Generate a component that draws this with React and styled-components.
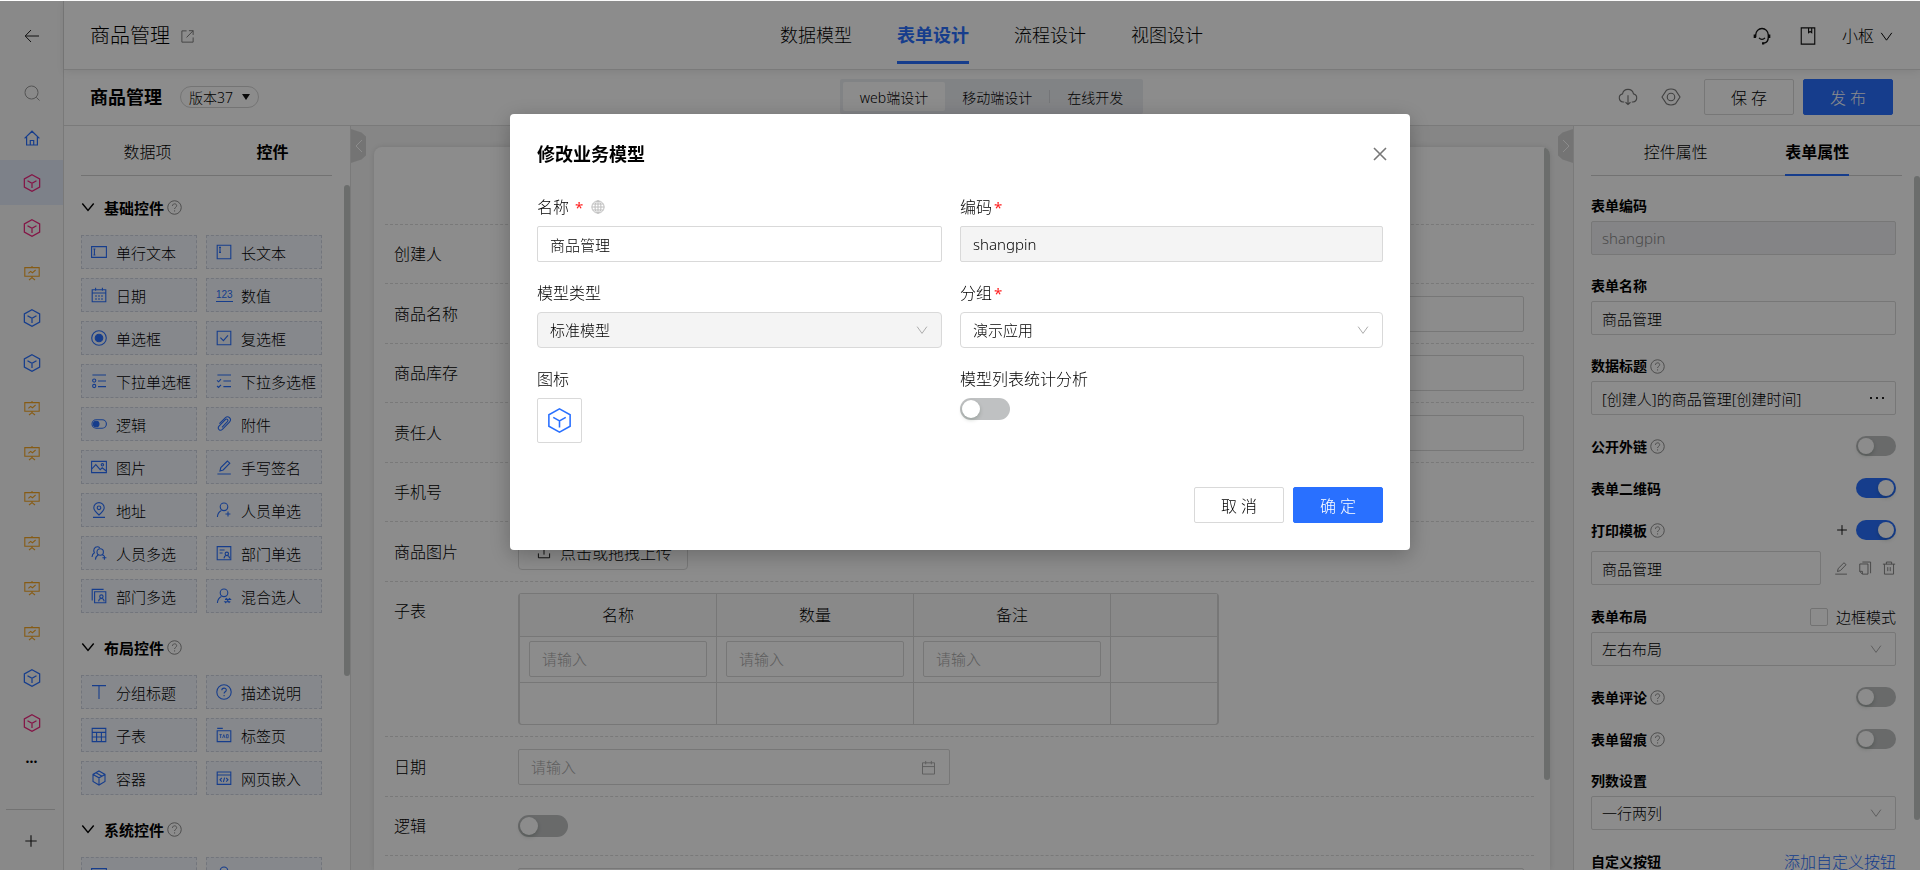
import React from 'react';
import styled, { createGlobalStyle, css } from 'styled-components';

const icons = {
  back: <path d="M15 8H1.5M7 2 1.2 8 7 14" />,
  search: (
    <>
      <circle cx="7.5" cy="7.5" r="6.5" />
      <path d="m12.3 12.3 3.2 3.2" />
    </>
  ),
  home: <path d="M.6 8.4 8 1.2l7.4 7.2M2.6 7v8h10.8V7M6.3 15v-4.5h3.4V15" />,
  cube: <path d="M8 .6 14.8 4.3v7.4L8 15.4 1.2 11.7V4.3zM4 6l4 2.3L12 6M8 8.3v4.2" />,
  board: (
    <path d="M.8 2.6h14.4v8.6H.8zM8 1v1.6M8 11.2v1.6M5 15l3-2.4L11 15M4.4 8.4l2.2-2 1.8 1.4 3.2-2.8" />
  ),
  plus: <path d="M8 1.5v13M1.5 8h13" />,
  share: <path d="M7 2H2v12h12V9M9.5 1.8H14v4.5M14 1.8 7 9" />,
  headset: (
    <>
      <path d="M2.4 9V7.2a5.6 5.9 0 0 1 11.2 0V9M13.6 9c0 3.4-1.6 5-4.2 5.4M5.4 9.6c1.4 1.8 3.8 1.8 5.2 0" />
      <path d="M1.6 6.6v3.2M14.4 6.6v3.2M8 14.6h2" strokeWidth="2" />
    </>
  ),
  book: <path d="M2 .8h12v14.4H2zM8.5.8V5l1.4-1 1.4 1V.8" />,
  down: <path d="m1.5 3.5 6.5 9 6.5-9" />,
  fold: <path d="m1.5 4 6.5 8 6.5-8" />,
  left: <path d="M11 2 5 8l6 6" />,
  right: <path d="m5 2 6 6-6 6" />,
  close: <path d="m2 2 12 12M14 2 2 14" />,
  cloud: <path d="M5 12H4a3.3 3.3 0 0 1-.4-6.5 4.5 4.5 0 0 1 8.8 0A3.3 3.3 0 0 1 12 12h-1M8 6.5V14M6 12.2 8 14l2-1.8" />,
  eye: (
    <>
      <path d="M.8 8 4.4 2.6c2.2-1.2 5-1.2 7.2 0L15.2 8l-3.6 5.4c-2.2 1.2-5 1.2-7.2 0z" />
      <circle cx="8" cy="8" r="3" />
    </>
  ),
  help: (
    <>
      <circle cx="8" cy="8" r="7.2" />
      <path d="M5.8 6.3C5.8 3.3 10.3 3.5 10.3 6c0 1.8-2.2 1.8-2.2 3.6M8.1 11v1.3" />
    </>
  ),
  globe: (
    <>
      <circle cx="8" cy="8" r="7" />
      <ellipse cx="8" cy="8" rx="3.4" ry="7" />
      <path d="M8 1v14M1 8h14M2 4.6h12M2 11.4h12" />
    </>
  ),
  input: <path d="M.6 2.6h14.8v10.8H.6zM3.4 5v6M2.4 5h2M2.4 11h2" />,
  textarea: <path d="M1.2 1.2h13.6v13.6H1.2zM4 3.4v5M3 3.4h2M3 8.4h2" />,
  date: <path d="M1.2 2.8h13.6v12H1.2zM1.2 6h13.6M4.6.8v3M11.4.8v3M4 9h2M7 9h2M10 9h2M4 12h2M7 12h2M10 12h2" />,
  radio: (
    <>
      <circle cx="8" cy="8" r="7.3" />
      <circle cx="8" cy="8" r="3.8" fill="currentColor" />
    </>
  ),
  checkbox: <path d="M1.2 1.2h13.6v13.6H1.2zM4.4 7.6l3 3 4.6-5.2" />,
  radioList: (
    <>
      <path d="M1.4 2H15M7 8h8M7 13.6h8" />
      <circle cx="3.2" cy="7.6" r="1.6" />
      <circle cx="3.2" cy="13" r="1.6" />
    </>
  ),
  checkList: <path d="M1.4 2H15M7.4 8H15M7.4 13.6H15M1 7.4l1.6 1.4L5 6.2M1 13l1.6 1.4L5 11.8" />,
  toggle: (
    <>
      <rect x="1" y="3.8" width="14.4" height="8.4" rx="4.2" />
      <circle cx="5.2" cy="8" r="2.8" fill="currentColor" />
    </>
  ),
  clip: <path d="M6 11.4 11.4 5.6c1.4-1.6-.6-3.4-2-2L3 10.2c-2 2.4 1 5.4 3.4 3.2l7-7.2c3-3.4-1.2-7-4.2-4.4L3.4 7.6" />,
  image: (
    <>
      <path d="M.6 2.4h14.8v11.2H.6zM.8 10l4-4.4 4.4 5 2-1.8 4 3.2" />
      <circle cx="11.4" cy="5.8" r="1.2" />
    </>
  ),
  pen: <path d="M1.4 15h13.4M4 12l.8-3.4L11.4 2l2.4 2.2-6.6 6.8z" />,
  pin: (
    <>
      <path d="M8 13C4.4 9.8 2.8 8.2 2.8 5.8a5.2 5.2 0 0 1 10.4 0C13.2 8.2 11.6 9.8 8 13zM2 15.4h12" />
      <circle cx="8" cy="5.8" r="1.8" />
    </>
  ),
  user: (
    <>
      <circle cx="8" cy="4.8" r="3.8" />
      <path d="M1.4 15c.2-3.4 1.8-5.2 4-6.4M9.4 12h5M12 9.6v5" />
    </>
  ),
  users: (
    <>
      <circle cx="9.2" cy="7" r="3.2" />
      <path d="M4.4 14.6c.2-2.6 1.2-3.6 2.8-4.8M1 12c.2-2.4 1-3.4 2.4-4.2C1.8 5 3.4 1.8 6.4 1.8c1 0 1.8.4 2.4 1M11.4 12.8h4M13.4 10.8v4M11.4 9.8l1.6 1" />
    </>
  ),
  dept: (
    <>
      <path d="M14.8 14.8H1.2V1.6h13.6zM3.6 5h5M3.6 8h3" />
      <circle cx="10.8" cy="8.8" r="1.7" />
      <path d="M8 13.4c.4-3.8 5.2-3.8 5.6 0" />
    </>
  ),
  depts: (
    <>
      <path d="M3.6 3.8h11.2v11H3.6zM1.2 12.4V1.4h11.4" />
      <circle cx="10.4" cy="8.6" r="1.7" />
      <path d="M7.6 13.4c.4-3.8 5.2-3.8 5.6 0" />
    </>
  ),
  mixed: (
    <>
      <circle cx="8" cy="4.8" r="3.8" />
      <path d="M1.4 15c.2-3.4 1.8-5.2 4-6.4M9 11.4h5.4l-1.2-1.2M14.4 13.8H9l1.2 1.2M10 10l3.4 5" />
    </>
  ),
  title: <path d="M1 1.6h14M8 1.6V15" />,
  table: <path d="M1.2 1.4h13.6v13.2H1.2zM1.2 5.4h13.6M1.2 10h13.6M5.6 5.4v9.2M10.4 5.4v9.2" />,
  tab: (
    <>
      <path d="M1.2 3.8h13.6v10.8H1.2zM1.2 1.4h5.6" />
      <path d="M3.4 7.6h2.4M4.6 7.6V11M6.6 11l1.2-3.4L9 11M10.4 7.6h1.8v3.2h-1.8z" strokeWidth=".8" />
    </>
  ),
  box: <path d="M8 1 14 4.4v7L8 15l-6-3.6v-7zM2 4.4l6 3.4 6-3.4M8 7.8V15M5 2.8l6 3.4" />,
  embed: <path d="M1.2 2h13.6v12.4H1.2zM1.2 5h13.6M5.8 8 4 9.8l1.8 1.8M10.2 8l1.8 1.8-1.8 1.8M8.6 7.6l-1.2 4.4" />,
  upload: <path d="M8 11V1.6M4.6 5 8 1.6 11.4 5M1.6 9.6v5h12.8v-5" />,
  calendar: <path d="M1.6 3h12.8v12H1.6zM1.6 7h12.8M5 1v3.6M11 1v3.6" />,
  copy: <path d="M5 1.2h9.4V14M2 3.4h9.4V15H5l-3-3zM2 11.8h3V15" />,
  trash: <path d="M1 3.6h14M5 3.6V1.2h6v2.4M2.8 3.6V15h10.4V3.6M6.6 7v4.6M9.4 7v4.6" />,
};

const Icon = ({ name, size = 16, stroke = 1 }) => (
  <Svg viewBox="0 0 16 16" $size={size} strokeWidth={stroke} aria-hidden="true">
    {icons[name]}
  </Svg>
);

const railItems = [
  ['cube', 'pink', true],
  ['cube', 'pink'],
  ['board', 'amber'],
  ['cube', 'blue'],
  ['cube', 'blue'],
  ['board', 'amber'],
  ['board', 'amber'],
  ['board', 'amber'],
  ['board', 'amber'],
  ['board', 'amber'],
  ['board', 'amber'],
  ['cube', 'blue'],
  ['cube', 'pink'],
];

const controlGroups = [
  {
    title: '基础控件',
    items: [
      ['input', '单行文本'],
      ['textarea', '长文本'],
      ['date', '日期'],
      ['number', '数值'],
      ['radio', '单选框'],
      ['checkbox', '复选框'],
      ['radioList', '下拉单选框'],
      ['checkList', '下拉多选框'],
      ['toggle', '逻辑'],
      ['clip', '附件'],
      ['image', '图片'],
      ['pen', '手写签名'],
      ['pin', '地址'],
      ['user', '人员单选'],
      ['users', '人员多选'],
      ['dept', '部门单选'],
      ['depts', '部门多选'],
      ['mixed', '混合选人'],
    ],
  },
  {
    title: '布局控件',
    items: [
      ['title', '分组标题'],
      ['help', '描述说明'],
      ['table', '子表'],
      ['tab', '标签页'],
      ['box', '容器'],
      ['embed', '网页嵌入'],
    ],
  },
  {
    title: '系统控件',
    items: [['input'], ['user']],
  },
];

const colors = { pink: '#f0257f', amber: '#f5a623', blue: '#2970ff' };

const Rail = () => (
  <RailNav>
    <RailButton $tall aria-label="返回">
      <Icon name="back" />
    </RailButton>
    <RailButton $color="#999" aria-label="搜索">
      <Icon name="search" />
    </RailButton>
    <RailButton $color={colors.blue} aria-label="首页">
      <Icon name="home" stroke={1.2} />
    </RailButton>
    {railItems.map(([name, color, active], i) => (
      <RailButton key={i} $color={colors[color]} $active={active} aria-label={name}>
        <Icon name={name} size={name === 'cube' ? 18 : 16} stroke={1.1} />
      </RailButton>
    ))}
    <MoreButton aria-label="更多">...</MoreButton>
    <RailFooter>
      <RailButton aria-label="添加">
        <Icon name="plus" size={14} stroke={1.3} />
      </RailButton>
    </RailFooter>
  </RailNav>
);

const TopBar = () => (
  <Header>
    <HeaderTitle>
      商品管理
      <Icon name="share" size={15} />
    </HeaderTitle>
    <HeaderNav>
      <HeaderLink href="#model">数据模型</HeaderLink>
      <HeaderLink href="#form" $active>
        表单设计
      </HeaderLink>
      <HeaderLink href="#flow">流程设计</HeaderLink>
      <HeaderLink href="#view">视图设计</HeaderLink>
    </HeaderNav>
    <HeaderActions>
      <IconButton aria-label="客服">
        <Icon name="headset" size={18} stroke={1.2} />
      </IconButton>
      <IconButton aria-label="文档">
        <Icon name="book" size={18} />
      </IconButton>
      <UserButton>
        小枢
        <Icon name="down" size={13} stroke={1.2} />
      </UserButton>
    </HeaderActions>
  </Header>
);

const ToolBar = () => (
  <SubHeader>
    <SubTitle>
      <h1>商品管理</h1>
      <VersionButton>
        版本37
        <Caret />
      </VersionButton>
    </SubTitle>
    <Segmented>
      <Segment $active>web端设计</Segment>
      <Segment>移动端设计</Segment>
      <SegmentLine />
      <Segment>在线开发</Segment>
    </Segmented>
    <SubActions>
      <IconButton $muted aria-label="下载">
        <Icon name="cloud" size={20} stroke={0.9} />
      </IconButton>
      <IconButton $muted aria-label="预览">
        <Icon name="eye" size={20} stroke={0.9} />
      </IconButton>
      <ButtonRow>
        <Button>保 存</Button>
        <Button $primary>发 布</Button>
      </ButtonRow>
    </SubActions>
  </SubHeader>
);

const ControlPanel = () => (
  <LeftPanel>
    <PanelTabs $left>
      <PanelTab>数据项</PanelTab>
      <PanelTab $active>控件</PanelTab>
    </PanelTabs>
    <Groups>
      {controlGroups.map((group) => (
        <section key={group.title}>
          <GroupTitle>
            <Icon name="fold" size={14} stroke={1.6} />
            <span>{group.title}</span>
            <Help>
              <Icon name="help" size={15} />
            </Help>
          </GroupTitle>
          <ControlGrid>
            {group.items.map(([name, label]) => (
              <Control key={name}>
                <ControlIcon>
                  {name === 'number' ? <Digits>123</Digits> : <Icon name={name} stroke={1.1} />}
                </ControlIcon>
                {label}
              </Control>
            ))}
          </ControlGrid>
        </section>
      ))}
    </Groups>
    <Thumb $top={59} $height={491} />
  </LeftPanel>
);

const PairRow = ({ label, id }) => (
  <FormRow>
    <FormItem>
      <label htmlFor={id}>{label}</label>
      <TextInput id={id} />
    </FormItem>
    <FormItem>
      <span />
      <TextInput aria-label={label} />
    </FormItem>
  </FormRow>
);

const FormCanvas = () => (
  <Canvas>
    <Handle aria-label="收起左侧">
      <Icon name="left" />
    </Handle>
    <Handle $right aria-label="收起右侧">
      <Icon name="right" />
    </Handle>
    <Card>
      <CardHead />
      <FormRows>
        <FormRow>
          <FormItem>
            <span>创建人</span>
          </FormItem>
        </FormRow>
        <PairRow label="商品名称" id="goodsName" />
        <PairRow label="商品库存" id="goodsStock" />
        <PairRow label="责任人" id="owner" />
        <FormRow>
          <FormItem>
            <span>手机号</span>
          </FormItem>
        </FormRow>
        <FormRow>
          <FormItem>
            <span>商品图片</span>
            <UploadButton>
              <Icon name="upload" size={14} />
              点击或拖拽上传
            </UploadButton>
          </FormItem>
        </FormRow>
        <FormRow $wide>
          <FormItem>
            <span>子表</span>
            <SubTable>
              <thead>
                <tr>
                  <th>名称</th>
                  <th>数量</th>
                  <th>备注</th>
                  <th aria-label="操作" />
                </tr>
              </thead>
              <tbody>
                <tr>
                  <td><TextInput placeholder="请输入" aria-label="名称" /></td>
                  <td><TextInput placeholder="请输入" aria-label="数量" /></td>
                  <td><TextInput placeholder="请输入" aria-label="备注" /></td>
                  <td />
                </tr>
                <tr>
                  <td />
                  <td />
                  <td />
                  <td />
                </tr>
              </tbody>
            </SubTable>
          </FormItem>
        </FormRow>
        <FormRow>
          <FormItem>
            <label htmlFor="date">日期</label>
            <Affixed>
              <TextInput id="date" placeholder="请输入" />
              <Affix>
                <Icon name="calendar" size={15} />
              </Affix>
            </Affixed>
          </FormItem>
        </FormRow>
        <FormRow>
          <FormItem>
            <label htmlFor="logic">逻辑</label>
            <Switch id="logic" $large />
          </FormItem>
        </FormRow>
        <FormRow $wide>
          <FormItem>
            <span />
            <TextInput aria-label="备注" />
          </FormItem>
        </FormRow>
      </FormRows>
      <Thumb $top={0} $height={633} />
    </Card>
  </Canvas>
);

const SwitchRow = ({ id, label, help, checked, children }) => (
  <PropRow>
    <PropLabel htmlFor={id}>
      {label}
      {help && <Help><Icon name="help" size={15} /></Help>}
    </PropLabel>
    <PropTools>
      {children}
      <Switch id={id} defaultChecked={checked} />
    </PropTools>
  </PropRow>
);

const PropPanel = () => (
  <RightPanel>
    <PanelTabs>
      <PanelTab>控件属性</PanelTab>
      <PanelTab $active $line>
        表单属性
      </PanelTab>
    </PanelTabs>
    <Props>
      <PropField>
        <PropLabel htmlFor="formCode">表单编码</PropLabel>
        <TextInput id="formCode" $small $disabled defaultValue="shangpin" disabled />
      </PropField>
      <PropField>
        <PropLabel htmlFor="formName">表单名称</PropLabel>
        <TextInput id="formName" $small defaultValue="商品管理" />
      </PropField>
      <PropField>
        <PropLabel htmlFor="dataTitle">
          数据标题
          <Help>
            <Icon name="help" size={15} />
          </Help>
        </PropLabel>
        <Affixed>
          <TextInput id="dataTitle" $small defaultValue="[创建人]的商品管理[创建时间]" />
          <Affix $dark>
            <Dots><i /><i /><i /></Dots>
          </Affix>
        </Affixed>
      </PropField>
      <SwitchRow id="publicLink" label="公开外链" help />
      <SwitchRow id="qrcode" label="表单二维码" checked />
      <PrintBlock>
        <SwitchRow id="print" label="打印模板" help checked>
          <IconButton aria-label="添加模板">
            <Icon name="plus" size={12} stroke={1.3} />
          </IconButton>
        </SwitchRow>
        <TemplateRow>
          <TextInput $small defaultValue="商品管理" aria-label="模板名称" />
          <IconButton $muted aria-label="编辑"><Icon name="pen" size={14} /></IconButton>
          <IconButton $muted aria-label="复制"><Icon name="copy" size={14} /></IconButton>
          <IconButton $muted aria-label="删除"><Icon name="trash" size={14} /></IconButton>
        </TemplateRow>
      </PrintBlock>
      <PropField>
        <PropRow>
          <PropLabel htmlFor="layout">表单布局</PropLabel>
          <CheckLabel>
            <Checkbox type="checkbox" />
            边框模式
          </CheckLabel>
        </PropRow>
        <SelectBox id="layout" value="左右布局" small />
      </PropField>
      <SwitchRow id="comment" label="表单评论" help />
      <SwitchRow id="trace" label="表单留痕" help />
      <PropField>
        <PropLabel htmlFor="columns">列数设置</PropLabel>
        <SelectBox id="columns" value="一行两列" small />
      </PropField>
      <PropRow>
        <PropLabel as="span">自定义按钮</PropLabel>
        <AddLink href="#add">添加自定义按钮</AddLink>
      </PropRow>
    </Props>
    <Thumb $top={50} $height={644} />
  </RightPanel>
);

const SelectBox = ({ id, value, small, disabled }) => (
  <Affixed>
    <Select id={id} $small={small} $filled={disabled} disabled={disabled}>
      <option>{value}</option>
    </Select>
    <Affix>
      <Icon name="down" size={12} stroke={1.3} />
    </Affix>
  </Affixed>
);

const ModelDialog = () => (
  <Mask>
    <Dialog role="dialog" aria-labelledby="dialogTitle">
      <DialogHead>
        <h2 id="dialogTitle">修改业务模型</h2>
        <CloseButton aria-label="关闭">
          <Icon name="close" size={16} stroke={1.6} />
        </CloseButton>
      </DialogHead>
      <DialogBody>
        <Field>
          <FieldLabel htmlFor="name">
            名称 <Star $spaced>*</Star>
            <Globe>
              <Icon name="globe" size={14} stroke={1.1} />
            </Globe>
          </FieldLabel>
          <TextInput id="name" defaultValue="商品管理" />
        </Field>
        <Field>
          <FieldLabel htmlFor="code">
            编码<Star>*</Star>
          </FieldLabel>
          <TextInput id="code" $filled defaultValue="shangpin" disabled />
        </Field>
        <Field>
          <FieldLabel htmlFor="type">模型类型</FieldLabel>
          <SelectBox id="type" value="标准模型" disabled />
        </Field>
        <Field>
          <FieldLabel htmlFor="group">
            分组<Star>*</Star>
          </FieldLabel>
          <SelectBox id="group" value="演示应用" />
        </Field>
        <Field>
          <FieldLabel as="span">图标</FieldLabel>
          <IconPicker aria-label="选择图标">
            <Icon name="cube" size={25} />
          </IconPicker>
        </Field>
        <Field>
          <FieldLabel htmlFor="stats">模型列表统计分析</FieldLabel>
          <Switch id="stats" $large />
        </Field>
      </DialogBody>
      <DialogFoot>
        <Button>取 消</Button>
        <Button $primary>确 定</Button>
      </DialogFoot>
    </Dialog>
  </Mask>
);

const App = () => (
  <>
    <GlobalStyle />
    <Page>
      <Rail />
      <Main>
        <TopBar />
        <ToolBar />
        <Workspace>
          <ControlPanel />
          <FormCanvas />
          <PropPanel />
        </Workspace>
      </Main>
    </Page>
    <ModelDialog />
  </>
);

const GlobalStyle = createGlobalStyle`
  *, *::before, *::after {
    box-sizing: border-box;
  }

  body {
    margin: 0;
    background: #fff;
    overflow: hidden;
  }

  body, button, input, select {
    font-family: "Noto Sans", "Noto Sans CJK SC", sans-serif;
    font-weight: 300;
    color: #000;
  }

  button {
    border: 0;
    padding: 0;
    background: none;
    cursor: pointer;
  }

  h1, h2 {
    margin: 0;
  }
`;

const Svg = styled.svg`
  display: block;
  flex: none;
  width: ${(p) => p.$size}px;
  height: ${(p) => p.$size}px;
  fill: none;
  stroke: currentColor;
`;

const Page = styled.div`
  display: flex;
  height: 100vh;
  padding-top: 1px;
`;

const RailNav = styled.nav`
  flex: none;
  width: 64px;
  display: flex;
  flex-direction: column;
  background: #f9f9f9;
  border-right: 1px solid #dcdcdc;
`;

const RailButton = styled.button`
  flex: none;
  display: flex;
  align-items: center;
  justify-content: center;
  height: 45px;
  color: ${(p) => p.$color || '#222'};
  background: ${(p) => (p.$active ? '#e3ebfa' : 'transparent')};

  ${(p) =>
    p.$tall &&
    css`
      height: 69px;
    `}
`;

const MoreButton = styled.button`
  height: 26px;
  font-size: 14px;
  line-height: 20px;
  font-weight: 700;
`;

const RailFooter = styled.div`
  margin: auto 8px 7px 6px;
  border-top: 1px solid #cfcfcf;
  display: flex;
  flex-direction: column;
  padding: 8px 0 0;
`;

const Main = styled.div`
  flex: 1;
  min-width: 0;
  display: flex;
  flex-direction: column;
`;

const Header = styled.header`
  flex: none;
  height: 69px;
  display: grid;
  grid-template-columns: 1fr auto 1fr;
  align-items: center;
  padding: 2px 27px 0 26px;
  border-bottom: 1px solid #dedede;
  box-shadow: 0 2px 8px rgba(0, 0, 0, 0.08);
  z-index: 1;
`;

const HeaderTitle = styled.div`
  display: flex;
  align-items: center;
  gap: 10px;
  font-size: 20px;
  line-height: 28px;

  svg {
    color: #777;
  }
`;

const HeaderNav = styled.nav`
  display: flex;
  gap: 45px;
`;

const HeaderLink = styled.a`
  padding: 14px 0 13px;
  border-bottom: 3px solid transparent;
  font-size: 18px;
  line-height: 26px;
  color: #000;
  text-decoration: none;

  ${(p) =>
    p.$active &&
    css`
      font-weight: 700;
      color: #2970ff;
      border-color: #2970ff;
    `}
`;

const HeaderActions = styled.div`
  display: flex;
  justify-content: flex-end;
  align-items: center;
  gap: 28px;
`;

const IconButton = styled.button`
  display: flex;
  color: ${(p) => (p.$muted ? '#777' : '#111')};
`;

const UserButton = styled.button`
  display: flex;
  align-items: center;
  gap: 6px;
  margin-left: -3px;
  font-size: 16px;
  line-height: 24px;
`;

const SubHeader = styled.div`
  flex: none;
  height: 56px;
  display: grid;
  grid-template-columns: 1fr auto 1fr;
  align-items: center;
  padding: 0 27px 2px 26px;
  border-bottom: 1px solid #dedede;
`;

const SubTitle = styled.div`
  display: flex;
  align-items: center;
  gap: 18px;

  h1 {
    font-size: 18px;
    line-height: 26px;
    font-weight: 700;
  }
`;

const VersionButton = styled.button`
  display: flex;
  align-items: center;
  gap: 9px;
  height: 22px;
  padding: 0 8px;
  border: 1px solid #d4d4d4;
  border-radius: 11px;
  font-size: 14px;
`;

const Caret = styled.span`
  border: 4px solid transparent;
  border-top: 6px solid #111;
  border-bottom: 0;
`;

const Segmented = styled.div`
  display: flex;
  align-items: center;
  padding: 3px;
  border-radius: 2px;
  background: #eceef3;
`;

const Segment = styled.button`
  height: 29px;
  padding: 0 17px;
  border-radius: 2px;
  font-size: 14px;
  background: ${(p) => (p.$active ? '#fff' : 'transparent')};
`;

const SegmentLine = styled.span`
  width: 1px;
  height: 13px;
  background: #d4d6da;
`;

const SubActions = styled.div`
  display: flex;
  justify-content: flex-end;
  align-items: center;
  gap: 23px;
`;

const ButtonRow = styled.div`
  display: flex;
  gap: 9px;
`;

const Button = styled.button`
  width: 90px;
  height: 36px;
  border: 1px solid ${(p) => (p.$primary ? '#2970ff' : '#d9d9d9')};
  border-radius: 2px;
  background: ${(p) => (p.$primary ? '#2970ff' : '#fff')};
  color: ${(p) => (p.$primary ? '#fff' : '#000')};
  font-size: 16px;
`;

const Workspace = styled.div`
  flex: 1;
  min-height: 0;
  display: flex;
`;

const LeftPanel = styled.aside`
  position: relative;
  flex: none;
  width: 287px;
  padding: 0 18px 0 17px;
  border-right: 1px solid #dedede;
  overflow: hidden;
`;

const RightPanel = styled.aside`
  position: relative;
  flex: none;
  width: 347px;
  padding: 0 18px 0 17px;
  border-left: 1px solid #dedede;
  overflow: hidden;
`;

const PanelTabs = styled.div`
  display: grid;
  grid-template-columns: 1fr 1fr;
  height: 50px;
  padding: 0 14px;
  border-bottom: 1px solid #cfcfcf;

  ${(p) =>
    p.$left &&
    css`
      grid-template-columns: 125px 125px;
      padding: 0 0 0 4px;
    `}
`;

const PanelTab = styled.button`
  justify-self: center;
  height: 50px;
  font-size: 16px;
  font-weight: ${(p) => (p.$active ? 700 : 300)};
  border-top: 2px solid transparent;
  border-bottom: 2px solid ${(p) => (p.$line ? '#2970ff' : 'transparent')};
`;

const Thumb = styled.span`
  position: absolute;
  right: 0;
  top: ${(p) => p.$top}px;
  width: 6px;
  height: ${(p) => p.$height}px;
  border-radius: 3px;
  background: #c3c7c5;
`;

const Groups = styled.div`
  display: flex;
  flex-direction: column;
  gap: 22px;
  padding-top: 19px;
`;

const GroupTitle = styled.div`
  display: flex;
  align-items: center;
  height: 24px;
  margin-bottom: 16px;
  font-size: 15px;
  font-weight: 700;

  span:first-of-type {
    margin-left: 9px;
  }
`;

const Help = styled.span`
  display: inline-flex;
  margin-left: 3px;
  color: #888;
`;

const ControlGrid = styled.div`
  display: grid;
  grid-template-columns: 116px 116px;
  gap: 9px;
`;

const Control = styled.div`
  display: flex;
  align-items: center;
  height: 34px;
  padding-left: 9px;
  gap: 9px;
  border: 1px dashed #d0d6e2;
  background: #f5f8ff;
  font-size: 15px;
  white-space: nowrap;
`;

const ControlIcon = styled.span`
  display: flex;
  width: 16px;
  color: #2970ff;
`;

const Digits = styled.span`
  border-bottom: 1px solid;
  font-family: "Liberation Sans", sans-serif;
  font-size: 10px;
  line-height: 12px;
`;

const Canvas = styled.main`
  position: relative;
  flex: 1;
  min-width: 0;
  display: flex;
  padding: 21px 23px 0;
  background: #f5f5f5;
`;

const Handle = styled.button`
  position: absolute;
  top: 3px;
  left: 0;
  width: 15px;
  height: 34px;
  display: flex;
  align-items: center;
  justify-content: center;
  color: #fff;
  background: #d4d4d4;
  clip-path: polygon(0 0, 70% 10%, 100% 22%, 100% 78%, 70% 90%, 0 100%);

  ${(p) =>
    p.$right &&
    css`
      left: auto;
      right: 0;
      clip-path: polygon(100% 0, 30% 10%, 0 22%, 0 78%, 30% 90%, 100% 100%);
    `}
`;

const Card = styled.div`
  position: relative;
  flex: 1;
  min-width: 0;
  overflow: hidden;
  padding: 0 16px 0 11px;
  border-radius: 8px 8px 0 0;
  background: #fff;
  box-shadow: 0 0 6px rgba(0, 0, 0, 0.12);
`;

const CardHead = styled.div`
  height: 78px;
  border-bottom: 1px dashed #dcdcdc;
`;

const FormRows = styled.div`
  display: flex;
  flex-direction: column;
`;

const FormRow = styled.div`
  display: grid;
  grid-template-columns: ${(p) => (p.$wide ? '1fr' : '1fr 1fr')};
  column-gap: 18px;
  padding: 11px 10px 11px 9px;
  border-bottom: 1px dashed #dcdcdc;

  &:nth-child(even) {
    padding-top: 12px;
  }
`;

const FormItem = styled.div`
  display: grid;
  grid-template-columns: 124px 1fr;
  min-height: 36px;
  font-size: 16px;
  line-height: 36px;
`;

const TextInput = styled.input`
  width: 100%;
  min-width: 0;
  height: 36px;
  padding: 0 12px;
  border: 1px solid #d9d9d9;
  border-radius: 2px;
  background: #fff;
  font-size: 15px;

  &::placeholder {
    color: #aaa;
  }

  ${(p) =>
    p.$small &&
    css`
      height: 34px;
      padding: 0 10px;
    `}

  ${(p) =>
    p.$filled &&
    css`
      background: #f4f4f4;
      color: #000;
    `}

  ${(p) =>
    p.$disabled &&
    css`
      background: #f0f1f4;
      color: #888;
    `}
`;

const UploadButton = styled.button`
  justify-self: start;
  display: flex;
  align-items: center;
  gap: 9px;
  height: 36px;
  padding: 0 15px 0 18px;
  border: 1px solid #d9d9d9;
  border-radius: 4px;
  font-size: 16px;
`;

const SubTable = styled.table`
  justify-self: start;
  table-layout: fixed;
  width: 701px;
  border: 1px solid #d9d9d9;
  border-right-width: 2px;
  border-left-width: 2px;
  border-radius: 4px;
  border-spacing: 0;
  line-height: 24px;

  th {
    height: 43px;
    padding: 0;
    font-weight: 300;
    background: #fafafa;
    border-bottom: 1px solid #d9d9d9;
  }

  td {
    height: 41px;
    padding: 4px 9px 5px;
  }

  tr:first-child td {
    height: 46px;
    border-bottom: 1px solid #d9d9d9;
  }

  th:not(:last-child), td:not(:last-child) {
    width: 197px;
    border-right: 1px solid #d9d9d9;
  }
`;

/* Field with an icon laid over its right end */
const Affixed = styled.div`
  display: grid;
  align-items: center;

  & > * {
    grid-area: 1 / 1;
  }
`;

const Affix = styled.span`
  justify-self: end;
  margin-right: ${(p) => (p.$dark ? 12 : 14)}px;
  color: ${(p) => (p.$dark ? '#222' : '#aaa')};
  pointer-events: none;
`;

const Dots = styled.span`
  display: flex;
  gap: 4px;

  i {
    width: 2px;
    height: 2px;
    background: currentColor;
  }
`;

const Select = styled.select`
  appearance: none;
  width: 100%;
  height: ${(p) => (p.$small ? 34 : 36)}px;
  padding: 0 ${(p) => (p.$small ? 10 : 12)}px;
  border: 1px solid #d9d9d9;
  border-radius: ${(p) => (p.$small ? 2 : 4)}px;
  background: ${(p) => (p.$filled ? '#f4f4f4' : '#fff')};
  color: #000;
  font-size: 15px;
  opacity: 1;
`;

const Switch = styled.input.attrs({ type: 'checkbox', role: 'switch' })`
  appearance: none;
  align-self: center;
  display: flex;
  width: ${(p) => (p.$large ? 50 : 40)}px;
  height: ${(p) => (p.$large ? 22 : 20)}px;
  margin: 0;
  padding: 2px;
  border-radius: 11px;
  background: #bfc1c2;
  cursor: pointer;

  &::before {
    content: "";
    width: ${(p) => (p.$large ? 18 : 16)}px;
    height: ${(p) => (p.$large ? 18 : 16)}px;
    border-radius: 50%;
    background: #fff;
    box-shadow: 0 2px 4px rgba(0, 35, 11, 0.2);
  }

  &:checked {
    justify-content: flex-end;
    background: #2970ff;
  }
`;

const Props = styled.div`
  display: flex;
  flex-direction: column;
  gap: 21px;
  padding: 20px 6px 0 0;
`;

const PropField = styled.div`
  display: flex;
  flex-direction: column;
  gap: 5px;
`;

const PropRow = styled.div`
  display: flex;
  align-items: center;
  justify-content: space-between;
  height: 21px;
`;

const PropLabel = styled.label`
  display: flex;
  align-items: center;
  font-size: 14px;
  line-height: 20px;
  font-weight: 700;
`;

const PropTools = styled.div`
  display: flex;
  align-items: center;
  align-self: flex-start;
  gap: 8px;
`;

const PrintBlock = styled.div`
  display: flex;
  flex-direction: column;
  gap: 10px;
`;

const TemplateRow = styled.div`
  display: flex;
  align-items: center;
  gap: 10px;

  input {
    flex: 1;
    margin-right: 3px;
  }
`;

const CheckLabel = styled.label`
  display: flex;
  align-items: center;
  gap: 8px;
  font-size: 15px;
`;

const Checkbox = styled.input`
  appearance: none;
  width: 18px;
  height: 18px;
  margin: 0;
  border: 1px solid #d0d0d0;
  border-radius: 2px;
`;

const AddLink = styled.a`
  color: #2970ff;
  font-size: 16px;
  line-height: 20px;
  text-decoration: none;
`;

const Mask = styled.div`
  position: fixed;
  inset: 1px 0 0;
  z-index: 10;
  display: flex;
  justify-content: center;
  align-items: flex-start;
  padding-top: 113px;
  background: rgba(0, 0, 0, 0.45);
`;

const Dialog = styled.div`
  width: 900px;
  max-width: 100%;
  padding: 27px;
  border-radius: 4px;
  background: #fff;
  box-shadow: 0 5px 22px rgba(0, 0, 0, 0.26);
`;

const DialogHead = styled.div`
  display: flex;
  justify-content: space-between;
  height: 26px;
  margin-bottom: 28px;

  h2 {
    font-size: 18px;
    line-height: 26px;
    font-weight: 700;
  }
`;

const CloseButton = styled.button`
  margin-right: -5px;
  color: #777;
`;

const DialogBody = styled.div`
  display: grid;
  grid-template-columns: 405fr 423fr;
  column-gap: 18px;
  row-gap: 19px;
`;

const Field = styled.div`
  display: flex;
  flex-direction: column;
  align-items: stretch;
  gap: 7px;

  & > button, & > input[type="checkbox"] {
    align-self: flex-start;
  }
`;

const FieldLabel = styled.label`
  display: flex;
  align-items: center;
  font-size: 16px;
  line-height: 24px;
`;

const Star = styled.span`
  margin-left: ${(p) => (p.$spaced ? 6 : 2)}px;
  font-size: 15px;
  font-weight: 400;
  color: #ff2020;
`;

const Globe = styled.span`
  margin-left: 8px;
  color: #bbb;
`;

const IconPicker = styled.button`
  display: flex;
  align-items: center;
  justify-content: center;
  width: 45px;
  height: 45px;
  border: 1px solid #d9d9d9;
  border-radius: 2px;
  color: #2970ff;
`;

const DialogFoot = styled.div`
  display: flex;
  justify-content: flex-end;
  gap: 9px;
  margin-top: 44px;
`;

export default App;
